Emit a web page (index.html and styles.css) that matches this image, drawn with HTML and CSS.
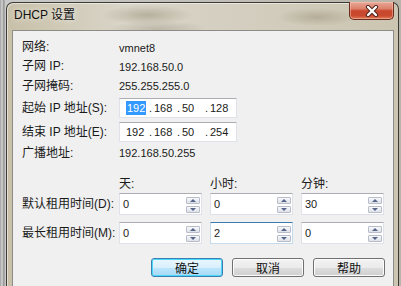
FILE: index.html
```html
<!DOCTYPE html>
<html lang="zh-CN">
<head>
    <meta charset="UTF-8">
    <title>DHCP 设置</title>
    <link rel="stylesheet" href="styles.css">
</head>
<body>
    <div class="window">
        <div class="titlebar">
            <span class="title">DHCP 设置</span>
            <div class="close">
                <svg width="14" height="12" viewBox="0 0 14 12">
                    <path d="M3 2 L11 10 M11 2 L3 10" stroke="#4a2118" stroke-width="4.2" stroke-linecap="round"/>
                    <path d="M3 2 L11 10 M11 2 L3 10" stroke="#ffffff" stroke-width="2.4" stroke-linecap="round"/>
                </svg>
            </div>
        </div>
        <div class="content">
            <div class="info">
                <div class="row r19"><span class="lbl">网络:</span><span class="val">vmnet8</span></div>
                <div class="row r19"><span class="lbl">子网 IP:</span><span class="val">192.168.50.0</span></div>
                <div class="row r20"><span class="lbl">子网掩码:</span><span class="val">255.255.255.0</span></div>
                <div class="row r24">
                    <span class="lbl">起始 IP 地址(S):</span>
                    <div class="ipbox">
                        <span class="seg first"><span class="sel">192</span></span>
                        <span class="seg"><span class="dot">.</span>168</span>
                        <span class="seg"><span class="dot">.</span>50</span>
                        <span class="seg"><span class="dot">.</span>128</span>
                    </div>
                </div>
                <div class="row r24">
                    <span class="lbl">结束 IP 地址(E):</span>
                    <div class="ipbox">
                        <span class="seg first">192</span>
                        <span class="seg"><span class="dot">.</span>168</span>
                        <span class="seg"><span class="dot">.</span>50</span>
                        <span class="seg"><span class="dot">.</span>254</span>
                    </div>
                </div>
                <div class="row r18"><span class="lbl">广播地址:</span><span class="val">192.168.50.255</span></div>
            </div>

            <div class="lease">
                <div class="lease-row head">
                    <span class="lbl"></span>
                    <span class="col">天:</span>
                    <span class="col">小时:</span>
                    <span class="col">分钟:</span>
                </div>
                <div class="lease-row">
                    <span class="lbl">默认租用时间(D):</span>
                    <div class="spin"><span class="num">0</span><div class="arrows"><span class="up"></span><span class="down"></span></div></div>
                    <div class="spin"><span class="num">0</span><div class="arrows"><span class="up"></span><span class="down"></span></div></div>
                    <div class="spin"><span class="num">30</span><div class="arrows"><span class="up"></span><span class="down"></span></div></div>
                </div>
                <div class="lease-row">
                    <span class="lbl">最长租用时间(M):</span>
                    <div class="spin"><span class="num">0</span><div class="arrows"><span class="up"></span><span class="down"></span></div></div>
                    <div class="spin focus"><span class="num">2</span><div class="arrows"><span class="up"></span><span class="down"></span></div></div>
                    <div class="spin"><span class="num">0</span><div class="arrows"><span class="up"></span><span class="down"></span></div></div>
                </div>
            </div>

            <div class="buttons">
                <button class="btn default">确定</button>
                <button class="btn">取消</button>
                <button class="btn">帮助</button>
            </div>
        </div>
    </div>
</body>
</html>
```

FILE: styles.css
```css
body {
    margin: 0;
    width: 401px;
    height: 286px;
    overflow: hidden;
    font-family: "Liberation Sans", "Noto Sans CJK SC", sans-serif;
    font-size: 12px;
    color: #1a1a1a;
    background: linear-gradient(90deg, #9c9c9c 0, #d6d6d6 2px, #8a8a8a 4px, #c9c9c9 5px, #b8b4a8 100%);
}
.window {
    box-sizing: border-box;
    margin: 2px 2px 0 6px;
    height: 284px;
    padding: 0 4px 0 5px;
    border: 1px solid #3d3b36;
    border-bottom: none;
    border-radius: 7px 7px 0 0;
    background:
        radial-gradient(ellipse 45px 10px at 140px 12px, rgba(120, 108, 80, 0.35), transparent),
        radial-gradient(ellipse 40px 9px at 310px 14px, rgba(120, 108, 80, 0.3), transparent),
        radial-gradient(ellipse 50px 8px at 150px 26px, rgba(110, 100, 80, 0.25), transparent),
        linear-gradient(90deg, #c8c0a8 0, #d9d5c8 30%, #d3cebf 60%, #cbc5b1 100%);
    box-shadow: inset 1px 1px 0 rgba(255, 255, 255, 0.5);
}
.titlebar {
    height: 27px;
    display: flex;
    justify-content: space-between;
    align-items: flex-start;
    padding-left: 2px;
}
.title {
    margin-top: 5px;
    line-height: 15px;
    font-size: 12px;
    color: #111;
    text-shadow: 0 0 6px rgba(255, 255, 255, 0.9);
}
.close {
    box-sizing: border-box;
    width: 45px;
    height: 18px;
    margin-top: -1px;
    display: flex;
    align-items: center;
    justify-content: center;
    border: 1px solid #6b2b1f;
    border-top: none;
    border-radius: 0 0 5px 5px;
    background: linear-gradient(#e8a898 0, #dd806a 40%, #c8472d 52%, #c94a2e 80%, #e07a55 100%);
    box-shadow: inset 0 0 0 1px rgba(255, 210, 190, 0.45);
}
.content {
    box-sizing: border-box;
    height: 256px;
    border: 1px solid #8d8c86;
    border-bottom: none;
    background: #f0f0f0;
    padding: 7px 0 0 9px;
}
.row {
    display: flex;
    align-items: center;
}
.r18 { height: 18px; }
.r19 { height: 19px; }
.r20 { height: 20px; }
.r24 { height: 24px; }
.lbl {
    width: 97px;
    flex: none;
    line-height: 15px;
}
.val {
    font-size: 11px;
}
.ipbox {
    box-sizing: border-box;
    width: 118px;
    height: 20px;
    display: flex;
    align-items: center;
    background: #fff;
    border: 1px solid #dfe2e8;
    border-top-color: #abadb3;
    font-size: 11px;
}
.seg {
    width: 28px;
    flex: none;
    display: flex;
    align-items: center;
}
.seg.first {
    width: 29px;
    padding-left: 6px;
    box-sizing: border-box;
}
.dot {
    width: 4px;
    margin-right: 1px;
}
.sel {
    background: #3399ff;
    color: #fff;
    padding: 1px 1px;
}
.lease {
    margin-top: 12px;
}
.lease-row {
    display: flex;
    align-items: center;
    gap: 8px;
    height: 22px;
    margin-bottom: 7px;
}
.lease-row .lbl {
    margin-right: -8px;
}
.lease-row.head {
    height: 18px;
    margin-bottom: 1px;
    align-items: flex-end;
}
.col {
    width: 83px;
    line-height: 15px;
}
.spin {
    box-sizing: border-box;
    width: 83px;
    height: 22px;
    display: flex;
    justify-content: space-between;
    background: #fff;
    border: 1px solid #dfe2e8;
    border-top-color: #abadb3;
    font-size: 11px;
}
.spin.focus {
    border-color: #c5daed;
    border-top-color: #3d7bad;
}
.num {
    padding: 4px 0 0 3px;
    line-height: 12px;
}
.arrows {
    display: flex;
    flex-direction: column;
    gap: 2px;
    margin: 3px 1px 0 0;
}
.up, .down {
    box-sizing: border-box;
    width: 14px;
    height: 7px;
    border: 1px solid #b9bdc9;
    border-radius: 1px;
    background: linear-gradient(#f8f9fb, #dde1e8);
    display: flex;
    align-items: center;
    justify-content: center;
}
.up::after, .down::after {
    content: "";
    border-left: 3px solid transparent;
    border-right: 3px solid transparent;
}
.up::after {
    border-bottom: 3px solid #56648a;
}
.down::after {
    border-top: 3px solid #56648a;
}
.buttons {
    display: flex;
    justify-content: flex-end;
    gap: 9px;
    margin-top: 14px;
    padding-right: 8px;
}
.btn {
    box-sizing: border-box;
    width: 72px;
    height: 19px;
    padding: 0;
    font-family: "Noto Sans CJK SC", sans-serif;
    font-size: 12px;
    line-height: 15px;
    color: #111;
    border: 1px solid #707070;
    border-radius: 3px;
    background: linear-gradient(#f2f2f2 0, #ebebeb 50%, #dddddd 51%, #cfcfcf 100%);
    box-shadow: inset 0 0 0 1px #fcfcfc;
}
.btn.default {
    border-color: #3c7fb1;
    background: linear-gradient(#eaf6fd 0, #d9f0fc 50%, #bee6fd 51%, #a7d9f5 100%);
    box-shadow: inset 0 0 0 1px #48d8fb;
}
```
